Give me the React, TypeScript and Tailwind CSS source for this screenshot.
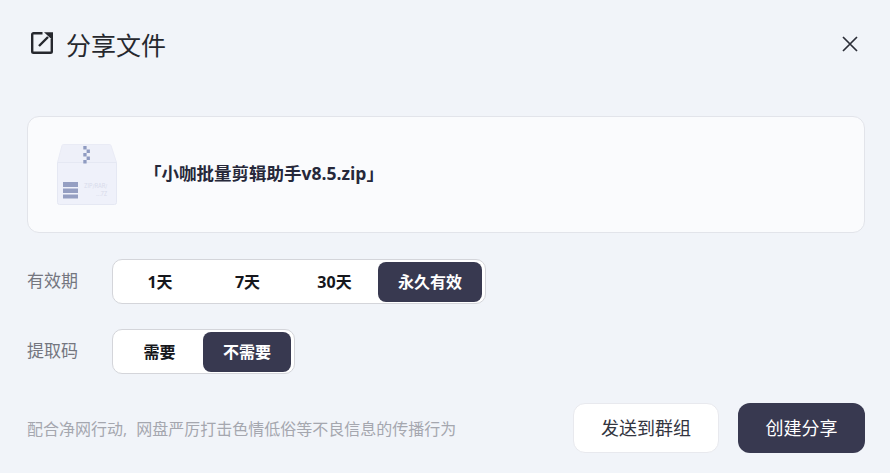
const font = "font-['Open_Sans','Noto_Sans_CJK_SC',sans-serif]";

function ShareIcon() {
  return (
    <svg width="22" height="22" viewBox="0 0 22 22" fill="none" className="mb-[2px] text-[#26282e]">
      <path d="M11.500 1.200H2.500a1.300 1.300 0 0 0-1.300 1.300v17a1.300 1.300 0 0 0 1.300 1.300h17a1.300 1.300 0 0 0 1.300-1.300V7" stroke="currentColor" strokeWidth="2.400" />
      <path d="M8 14L17 5" stroke="currentColor" strokeWidth="2.400" />
      <path d="M13 .2h9v8.300z" fill="currentColor" />
    </svg>
  );
}

function ZipIcon() {
  return (
    <svg width="60" height="62" viewBox="0 0 60 62" fill="none">
      <path d="M.5 18.500L5 1.500Q5.300.500 6.500.500h46q1.200 0 1.500 1L59.500 18.500z" fill="#eef0f9" stroke="#e9ebf5" />
      <path d="M.5 18.500h59v40a2 2 0 0 1-2 2h-55a2 2 0 0 1-2-2z" fill="#eff1fa" stroke="#e5e8f3" />
      <rect x="26.300" y="2" width="3.300" height="3.500" fill="#8f9bc1" />
      <rect x="29.600" y="5.500" width="3.300" height="3.500" fill="#8f9bc1" />
      <rect x="26.300" y="9" width="3.300" height="3.500" fill="#8f9bc1" />
      <rect x="29.600" y="12.500" width="3.300" height="3.500" fill="#8f9bc1" />
      <rect x="26.300" y="16" width="3.300" height="3.500" fill="#8f9bc1" />
      <rect x="6" y="38" width="15" height="5" fill="#959fc2" />
      <rect x="6" y="44.500" width="15" height="4.500" fill="#959fc2" />
      <rect x="6" y="50.500" width="15" height="4" fill="#959fc2" />
      <text x="27" y="44" fontSize="5.500" fill="#d8dbea" fontFamily="Inter, sans-serif">ZIP/RAR/</text>
      <text x="39" y="52" fontSize="5.500" fill="#d8dbea" fontFamily="Inter, sans-serif">...7Z</text>
    </svg>
  );
}

type Option = { label: string; width: string; active?: boolean };

function Segment({ options }: { options: Option[] }) {
  return (
    <div className="flex h-[45px] items-center rounded-[10px] border border-[#d4d5da] bg-white p-[3px]">
      {options.map((o) => (
        <div
          key={o.label}
          className={`flex h-[40px] items-center justify-center rounded-lg text-[16px] font-bold ${o.width} ${
            o.active ? "bg-[#383950] text-white" : "text-[#16171c]"
          }`}
        >
          {o.label}
        </div>
      ))}
    </div>
  );
}

export default function App() {
  return (
    <div className={`flex h-[473px] w-[890px] flex-col overflow-hidden bg-[#f1f4f9] pl-[27px] pr-[25px] ${font}`}>
      <div className="flex h-[88px] items-center justify-between pl-[4px] pr-[7px]">
        <div className="flex items-center gap-[13px]">
          <ShareIcon />
          <span className="pt-[1px] text-[25px] leading-[32px] text-[#26282e]">分享文件</span>
        </div>
        <svg width="16" height="16" viewBox="0 0 16 16" fill="none">
          <path d="M1 1l14 14M15 1L1 15" stroke="#2c2e38" strokeWidth="1.700" />
        </svg>
      </div>

      <div className="mt-[28px] flex h-[117px] items-center rounded-xl border border-[#e2e4ea] bg-[#fafbfd] pl-[29px]">
        <ZipIcon />
        <span className="ml-[27px] pb-[2px] text-[17.500px] font-bold text-[#26283a]">「小咖批量剪辑助手v8.5.zip」</span>
      </div>

      <div className="mt-[26px] flex items-center">
        <span className="w-[85px] pb-[1px] text-[17px] text-[#74767f]">有效期</span>
        <Segment
          options={[
            { label: "1天", width: "w-[88px]" },
            { label: "7天", width: "w-[87px]" },
            { label: "30天", width: "w-[87px]" },
            { label: "永久有效", width: "w-[104px]", active: true },
          ]}
        />
      </div>

      <div className="mt-[25px] flex items-center">
        <span className="w-[85px] pb-[1px] text-[17px] text-[#74767f]">提取码</span>
        <Segment
          options={[
            { label: "需要", width: "w-[87px]" },
            { label: "不需要", width: "w-[88px]", active: true },
          ]}
        />
      </div>

      <div className="mt-[29px] flex items-center justify-between">
        <span className="pt-[2px] text-[16px] text-[#a5a7af] [word-spacing:5px]">配合净网行动, 网盘严厉打击色情低俗等不良信息的传播行为</span>
        <div className="flex items-center gap-[19px]">
          <button className="h-[50px] w-[146px] rounded-xl border border-[#e8e9ee] bg-white pt-[1px] text-[18px] text-[#33353f]">
            发送到群组
          </button>
          <button className="h-[50px] w-[127px] rounded-xl bg-[#383950] pt-[1px] text-[18px] text-white">创建分享</button>
        </div>
      </div>
    </div>
  );
}
